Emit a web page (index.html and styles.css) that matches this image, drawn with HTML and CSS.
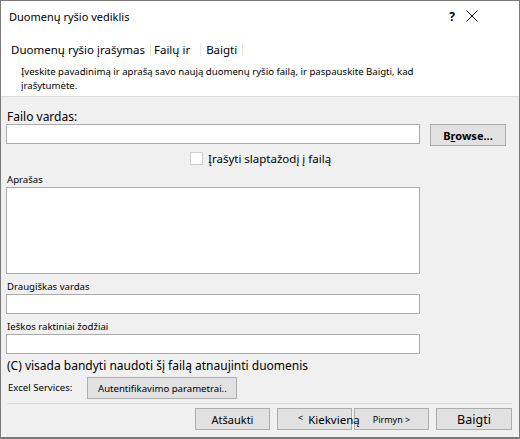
FILE: index.html
```html
<!DOCTYPE html>
<html lang="lt">
<head>
    <meta charset="UTF-8">
    <title>Duomenų ryšio vediklis</title>
    <link rel="stylesheet" href="styles.css">
</head>
<body>
    <div class="dialog">
        <div class="header">
            <div class="titlebar">
                <span class="title">Duomenų ryšio vediklis</span>
                <div class="title-buttons">
                    <span class="help">?</span>
                    <svg class="close" width="12" height="12" viewBox="0 0 12 12">
                        <path d="M0.5 0.5 L11.5 11.5 M11.5 0.5 L0.5 11.5" stroke="#000" stroke-width="1" fill="none"/>
                    </svg>
                </div>
            </div>
            <div class="steps">
                <span class="step">Duomenų ryšio įrašymas</span>
                <span class="step-sep"></span>
                <span class="step">Failų ir</span>
                <span class="step-sep wide"></span>
                <span class="step">Baigti</span>
                <span class="step-sep"></span>
            </div>
            <p class="intro">Įveskite pavadinimą ir aprašą savo naują duomenų ryšio failą, ir paspauskite Baigti, kad įrašytumėte.</p>
        </div>

        <div class="content">
            <label class="label big">Failo vardas:</label>
            <div class="file-row">
                <input class="field" type="text">
                <button class="btn browse">B<u>r</u>owse...</button>
            </div>
            <div class="check-row">
                <span class="checkbox"></span>
                <span class="check-text"><u>Į</u>rašyti slaptažodį į failą</span>
            </div>

            <label class="label small first">Aprašas</label>
            <textarea class="field area"></textarea>

            <label class="label small">Draugiškas vardas</label>
            <input class="field" type="text">

            <label class="label small">Ieškos raktiniai žodžiai</label>
            <input class="field" type="text">

            <div class="always">(C) visada bandyti naudoti šį failą atnaujinti duomenis</div>

            <div class="services">
                <span class="label small">Excel Services:</span>
                <button class="btn auth">Autentifikavimo parametrai..</button>
            </div>

            <div class="footer">
                <button class="btn foot cancel">Atšaukti</button>
                <button class="btn foot back"><span class="lt">&lt;</span><span>Kiekvieną</span></button>
                <button class="btn foot next">Pirmyn &gt;</button>
                <button class="btn foot finish">Baigti</button>
            </div>
        </div>
    </div>
</body>
</html>
```

FILE: styles.css
```css
body {
    margin: 0;
    background-color: #ffffff;
    font-family: "Noto Sans", "Liberation Sans", sans-serif;
    color: #000;
}

.dialog {
    width: 520px;
    height: 439px;
    box-sizing: border-box;
    border: 1px solid #7a7a7a;
    border-bottom-width: 2px;
    background-color: #f0f0f0;
    display: flex;
    flex-direction: column;
}

.header {
    box-sizing: border-box;
    background-color: #fff;
    height: 96px;
    border-bottom: 1px solid #dadada;
}

.titlebar {
    display: flex;
    justify-content: space-between;
    align-items: center;
    height: 30px;
    padding-left: 8px;
}

.title {
    font-size: 11px;
}

.title-buttons {
    display: flex;
    align-items: center;
    gap: 11px;
    padding-right: 41px;
}

.help {
    font-size: 12px;
    font-weight: bold;
    padding-top: 1px;
}

.steps {
    display: flex;
    align-items: center;
    height: 18px;
    margin-top: 9px;
    padding-left: 10px;
    font-size: 11.5px;
}

.step-sep {
    width: 1px;
    height: 13px;
    background-color: #ece6cf;
    margin: 0 3px 0 5px;
}

.step-sep.wide {
    background-color: #dcecf0;
    margin: 0 5px 0 10px;
}

.intro {
    margin: 7px 0 0 20px;
    width: 410px;
    font-size: 9.6px;
    line-height: 14px;
}

.content {
    flex: 1;
    display: flex;
    flex-direction: column;
    padding: 13px 7px 0 5px;
}

.label {
    display: block;
    padding-left: 1px;
}

.label.big {
    font-size: 12px;
    line-height: 14px;
}

.label.small {
    font-size: 9.6px;
    line-height: 14px;
}

.field {
    display: block;
    box-sizing: border-box;
    width: 414px;
    height: 20px;
    margin: 0;
    border: 1px solid #ababab;
    background-color: #fff;
    font: inherit;
}

.area {
    height: 87px;
    resize: none;
}

.file-row {
    display: flex;
    align-items: flex-start;
    gap: 10px;
}

.btn {
    box-sizing: border-box;
    height: 22px;
    margin: 0;
    padding: 0;
    border: 1px solid #adadad;
    background-color: #e1e1e1;
    font-family: "Noto Sans", "Liberation Sans", sans-serif;
    color: #000;
    overflow: visible;
    white-space: nowrap;
}

.browse {
    width: 76px;
    font-size: 11px;
    font-weight: bold;
}

.check-row {
    display: flex;
    align-items: center;
    height: 14px;
    margin: 5px 0 0 184px;
}

.checkbox {
    width: 11px;
    height: 11px;
    border: 1px solid #cfcfcf;
    background-color: #fff;
    margin-right: 5px;
}

.check-text {
    font-size: 11.5px;
}

.label.first {
    margin-top: 8px;
}

.field + .label.small {
    margin-top: 6px;
}

.always {
    font-size: 12px;
    line-height: 16px;
    margin-top: 4px;
    padding-left: 1px;
}

.services {
    display: flex;
    align-items: center;
    gap: 15px;
    margin-top: 3px;
    padding-bottom: 4px;
    border-bottom: 1px solid #dadada;
    margin-left: 1px;
}

.auth {
    width: 150px;
    font-size: 9.6px;
}

.footer {
    display: flex;
    justify-content: flex-end;
    margin-top: 4px;
}

.foot {
    width: 75px;
    font-size: 11px;
}

.cancel {
    margin-right: 7px;
}

.back {
    position: relative;
    z-index: 1;
    display: flex;
    align-items: center;
    justify-content: flex-start;
    padding-left: 20px;
    font-size: 11.5px;
}

.back .lt {
    font-size: 9px;
    margin-right: 5px;
    padding-bottom: 3px;
}

.next {
    margin-left: 2px;
    font-size: 9px;
    margin-right: 7px;
}

.finish {
    width: 76px;
    font-size: 12.5px;
}
```
